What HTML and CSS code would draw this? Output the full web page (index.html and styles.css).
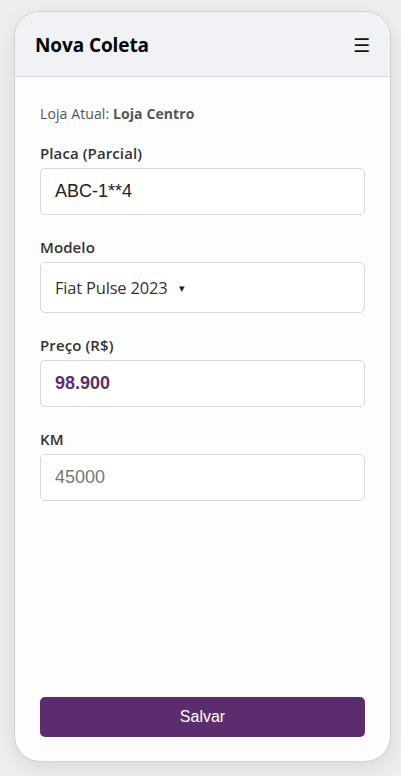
FILE: index.html
```html
<!DOCTYPE html>
<html lang="pt">
<head>
<meta charset="utf-8">
<title>Nova Coleta</title>
<link rel="stylesheet" href="styles.css">
</head>
<body>
<div class="phone">
  <header class="topbar">
    <h1 class="title">Nova Coleta</h1>
    <span class="menu">☰</span>
  </header>
  <main class="content">
    <p class="store">Loja Atual: <b>Loja Centro</b></p>
    <div class="field">
      <label class="label">Placa (Parcial)</label>
      <div class="input">ABC-1**4</div>
    </div>
    <div class="field">
      <label class="label">Modelo</label>
      <div class="input select">Fiat Pulse 2023 <span class="caret">▾</span></div>
    </div>
    <div class="field">
      <label class="label">Preço (R$)</label>
      <div class="input price">98.900</div>
    </div>
    <div class="field">
      <label class="label">KM</label>
      <div class="input placeholder">45000</div>
    </div>
    <div class="spacer"></div>
    <button class="save">Salvar</button>
  </main>
</div>
</body>
</html>
```
FILE: styles.css
```css
* { box-sizing: border-box; }
html, body { margin: 0; padding: 0; }
body {
  background: #efefef;
  width: 401px;
  height: 776px;
  overflow: hidden;
}
.phone {
  margin: 11px 0 0 14px;
  width: 377px;
  height: 751px;
  background: #fdfdfd;
  border: 1px solid #cfcfcf;
  border-radius: 26px;
  overflow: hidden;
  display: flex;
  flex-direction: column;
  box-shadow: 0 6px 24px rgba(0,0,0,0.10);
}
.topbar {
  height: 65px;
  flex: none;
  background: #f1f2f6;
  border-bottom: 1px solid #d8d8dc;
  display: flex;
  align-items: center;
  justify-content: space-between;
  padding: 2px 20px 0 20px;
}
.title {
  margin: 0;
  font-family: "Open Sans", sans-serif;
  font-weight: 700;
  font-size: 19px;
  color: #000;
  letter-spacing: -0.1px;
}
.menu {
  font-family: "DejaVu Sans", sans-serif;
  font-size: 19px;
  color: #111;
}
.content {
  flex: 1;
  display: flex;
  flex-direction: column;
  padding: 27px 25px 24px 25px;
}
.store {
  margin: 0;
  font-family: "Open Sans", sans-serif;
  font-size: 14px;
  line-height: 19px;
  color: #555;
  letter-spacing: 0.1px;
}
.store b { font-weight: 700; }
.field {
  display: flex;
  flex-direction: column;
  gap: 5px;
  margin-top: 20px;
}
.field + .field { margin-top: 22px; }
.label {
  font-family: "Open Sans", sans-serif;
  font-weight: 600;
  font-size: 15px;
  line-height: 20px;
  color: #333;
  letter-spacing: 0.1px;
}
.input {
  height: 47px;
  border: 1px solid #d9d9d9;
  border-radius: 5px;
  background: #fff;
  display: flex;
  align-items: center;
  padding: 0 14px;
  font-family: "Liberation Sans", Arial, sans-serif;
  font-size: 18px;
  color: #222;
}
.select {
  height: 51px;
  font-family: "Open Sans", sans-serif;
  font-size: 16.5px;
  color: #333;
  letter-spacing: -0.2px;
}
.caret {
  font-size: 11px;
  margin-left: 12px;
  color: #222;
}
.price {
  font-weight: 700;
  color: #5c2d6e;
}
.placeholder { color: #777; }
.spacer { flex: 1; }
.save {
  height: 40px;
  width: 100%;
  border: none;
  border-radius: 5px;
  background: #5c2d6e;
  color: #fff;
  font-family: "Liberation Sans", Arial, sans-serif;
  font-size: 16px;
}
```
